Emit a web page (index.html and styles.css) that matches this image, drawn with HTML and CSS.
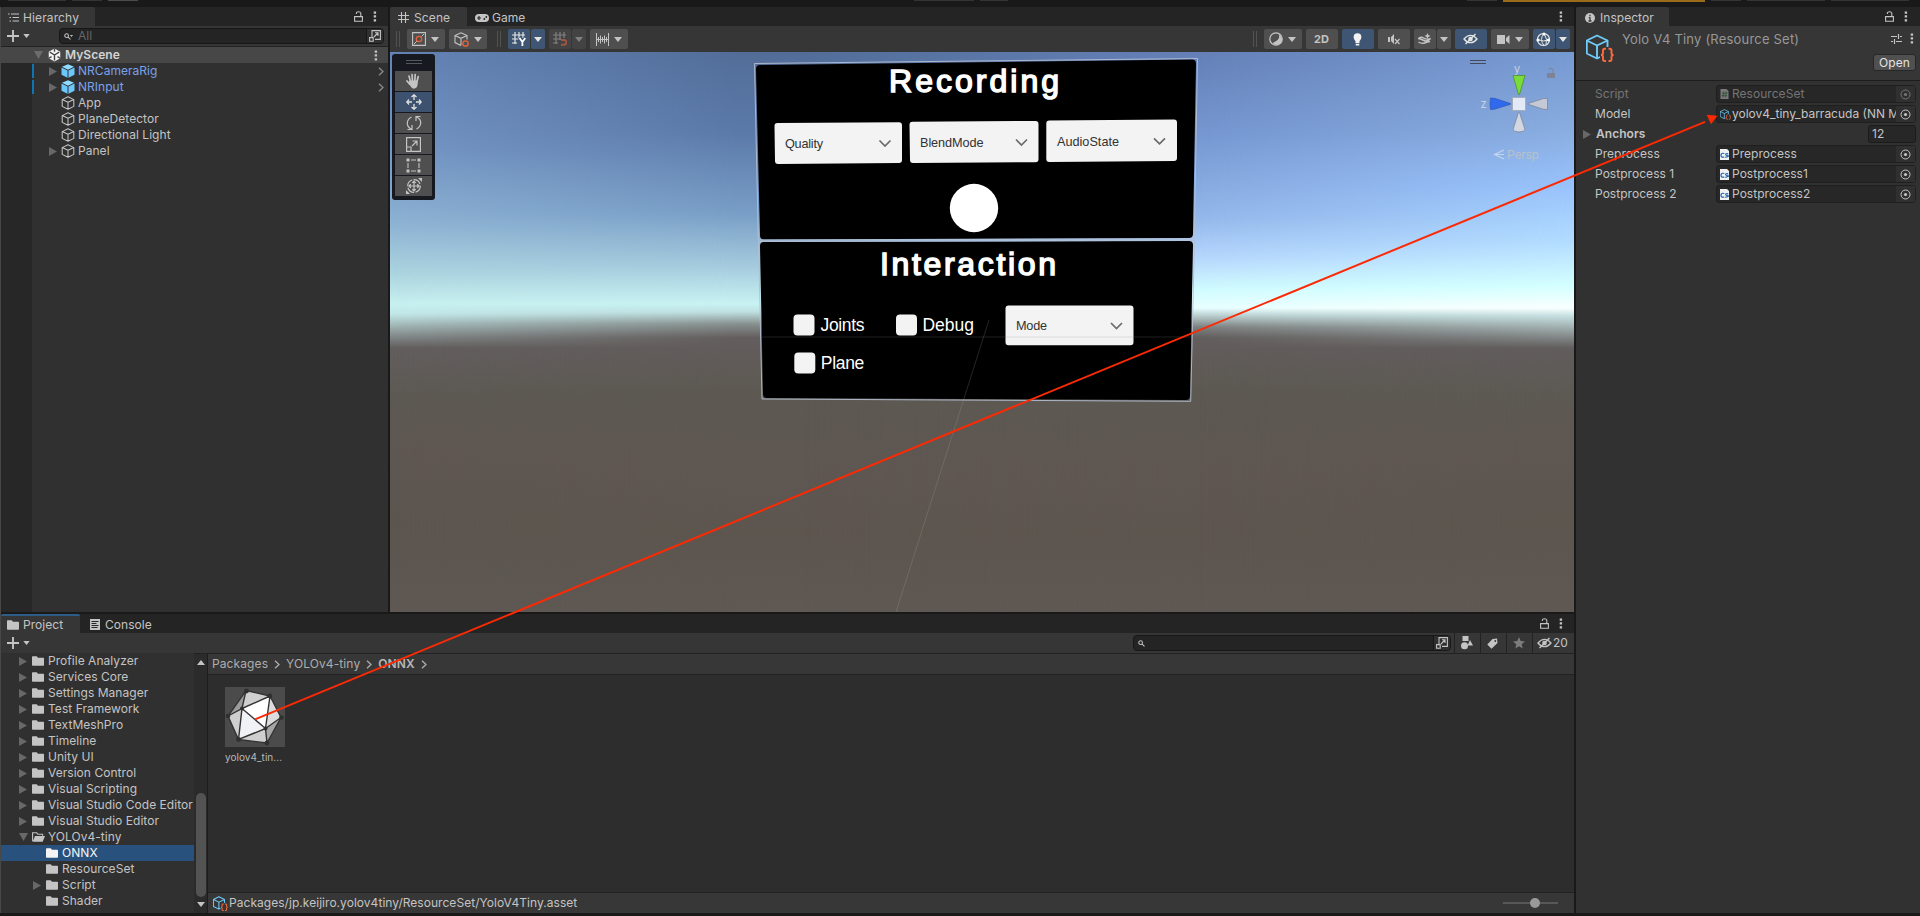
FILE: index.html
```html
<!DOCTYPE html>
<html lang="en">
<head>
<meta charset="utf-8">
<title>Unity Editor</title>
<link rel="stylesheet" href="styles.css">
</head>
<body>
<svg class="defs" width="0" height="0">
  <symbol id="lock" viewBox="0 0 9 11"><path d="M.6 5.6h7.8v4.6H.6zM2.4 3V1.8Q2.5.7 4.5.7T6.8 2v3.6" fill="none" stroke="currentColor" stroke-width="1.1"/></symbol>
  <symbol id="dots" viewBox="0 0 4 11"><path d="M.7.4h2.4v2.3H.7zM.7 4.3h2.4v2.3H.7zM.7 8.2h2.4v2.3H.7z" fill="currentColor"/></symbol>
  <symbol id="plus" viewBox="0 0 12 12"><path d="M6 0v12M0 6h12" stroke="currentColor" stroke-width="1.9"/></symbol>
  <symbol id="down" viewBox="0 0 8 5"><path d="M0 0h8L4 5z" fill="currentColor"/></symbol>
  <symbol id="right" viewBox="0 0 8 9"><path d="M0 0l8 4.5L0 9z" fill="currentColor"/></symbol>
  <symbol id="chev" viewBox="0 0 6 9"><path d="M1 .8l4 3.7-4 3.7" fill="none" stroke="currentColor" stroke-width="1.3"/></symbol>
  <symbol id="popout" viewBox="0 0 12 12"><path d="M3 7V.6h8.4v8.8H6M.6 7.6h3.6v3.6H.6zM5 7l3.8-4M6 2.8h3V6" fill="none" stroke="currentColor" stroke-width="1.1"/></symbol>
  <symbol id="mag" viewBox="0 0 8 8"><circle cx="3" cy="3" r="2.1" fill="none" stroke="currentColor" stroke-width="1.2"/><path d="M4.5 4.5L7.4 7.4" stroke="currentColor" stroke-width="1.2"/></symbol>
  <symbol id="cube" viewBox="0 0 14 14"><path d="M7 .8l5.8 2.8v6.8L7 13.3 1.2 10.400V3.600zM1.200 3.600L7 6.300l5.800-2.700M7 6.300v7" fill="none" stroke="currentColor" stroke-width="1.050" stroke-linejoin="round"/></symbol>
  <symbol id="prefab" viewBox="0 0 14 14"><path d="M7 .2l6 2.600L7 5.700 1 2.800z" fill="#8fdcff"/><path d="M.500 3.600l6 2.800v7.400l-6-3zM13.500 3.600l-6 2.800v7.400l6-3z" fill="#6cc8fb"/></symbol>
  <symbol id="folder" viewBox="0 0 12 10"><path d="M0 1Q0 .2.8.2h3.900l1.300 1.500h5.200q.8 0 .8.800v6.500q0 .8-.8.800H.8Q0 9.800 0 9z" fill="currentColor"/></symbol>
  <symbol id="folderopen" viewBox="0 0 13 10"><path d="M.6 9.200V.8h4l1.300 1.400h4.700v1.500" fill="none" stroke="currentColor" stroke-width="1.100"/><path d="M3 4h10l-2.300 5.800H.700z" fill="currentColor"/></symbol>
  <symbol id="target" viewBox="0 0 11 11"><circle cx="5.500" cy="5.500" r="4.500" fill="none" stroke="currentColor"/><circle cx="5.500" cy="5.500" r="1.600" fill="currentColor"/></symbol>
  <symbol id="asset" viewBox="0 0 28 28"><path d="M11 1.500l10.500 5v13L11 24.500.8 19.500v-13zM.800 6.500L11 11.500l10.500-5M11 11.500v13" fill="none" stroke="#6fcbfa" stroke-width="1.900" stroke-linejoin="round"/><path d="M14 13h14v15H14z" fill="var(--bg)"/><path d="M20 14.800h-1.300q-1.700 0-1.700 1.700v2.500q0 2-2 2 2 0 2 2v2.300q0 1.700 1.700 1.700H20M22.500 14.800h1.300q1.700 0 1.700 1.700v2.500q0 2 2 2-2 0-2 2v2.300q0 1.700-1.700 1.700h-1.300" fill="none" stroke="#ff6a3c" stroke-width="1.900"/></symbol>
  <symbol id="script" viewBox="0 0 9 11"><path d="M0 0h7l2 2v9H0z" fill="#f2f2f2"/><path d="M4.300 4.500Q1 3.600 1 6.200T4.300 8M8.200 4.800Q5.400 4.400 5.600 5.500T8 6.800 5.300 8.300" fill="none" stroke="#2568ac" stroke-width="1.200"/></symbol>
  <symbol id="eyeoff" viewBox="0 0 15 12"><path d="M1 6Q4 2.300 7.500 2.300T14 6Q11 9.700 7.500 9.700T1 6z" fill="none" stroke="currentColor" stroke-width="1.300"/><circle cx="7.500" cy="6" r="2.300" fill="currentColor"/><path d="M2.500 11L12.500 1" stroke="currentColor" stroke-width="1.500"/></symbol>
  <symbol id="magnetgrid" viewBox="0 0 14 14"><path d="M3 0v12M7 0v8M11 0v6M0 3h13M0 7h8M0 11h5" stroke="currentColor" stroke-width="1.200"/></symbol>
</svg>

<div class="appbar">
  <i class="s" style="width:58px"></i><i class="s" style="width:30px"></i><i class="s lit" style="width:30px"></i>
  <i class="s mid" style="width:60px"></i><i class="s" style="width:28px"></i>
  <i class="s far" style="width:30px"></i><i class="s warn" style="width:202px"></i><i class="s" style="width:30px"></i><i class="s" style="width:78px"></i><i class="s" style="width:78px"></i>
</div>
<div class="editor">
  <div class="left">
    <div class="upper">
      <section class="hierarchy">
        <header class="tabs">
          <div class="tab htab"><svg width="11" height="9" viewBox="0 0 11 9"><path d="M3 1h8M4.500 4.500H11M4.500 8H11M0 1h1.500M1.500 4.500H3M1.500 8H3" stroke="currentColor" stroke-width="1.100"/></svg>Hierarchy</div>
          <div class="tabtools"><svg width="9" height="11"><use href="#lock"/></svg><svg width="4" height="11"><use href="#dots"/></svg></div>
        </header>
        <div class="bar hbar">
          <svg class="plus" width="12" height="12"><use href="#plus"/></svg><svg width="7" height="4"><use href="#down"/></svg>
          <div class="search hsearch"><svg width="7" height="7"><use href="#mag"/></svg><svg class="tiny" width="3" height="2"><use href="#down"/></svg><span>All</span><b class="pop"><svg width="12" height="12"><use href="#popout"/></svg></b></div>
        </div>
        <div class="scenehead"><svg class="dim" width="9" height="8" viewBox="0 0 9 8"><path d="M0 0h9L4.500 8z" fill="currentColor"/></svg>
          <svg width="13" height="14" viewBox="0 0 14 14"><path d="M7 0l6.200 3.500v7L7 14 .8 10.500v-7z" fill="#f4f4f4"/><path d="M7 7V13M7 7L2 4M7 7l5-3" stroke="#444" stroke-width="1.500"/><path d="M7 0v3.500M.8 10.500l3-1.700M13.200 10.500l-3-1.700" stroke="#444" stroke-width="1.500"/></svg>
          <b>MyScene</b><svg class="end" width="4" height="11"><use href="#dots"/></svg></div>
        <div class="objects">
          <div class="obj pre"><svg class="arr" width="8" height="9"><use href="#right"/></svg><svg width="14" height="14"><use href="#prefab"/></svg><span>NRCameraRig</span><svg class="end" width="6" height="9"><use href="#chev"/></svg></div>
          <div class="obj pre"><svg class="arr" width="8" height="9"><use href="#right"/></svg><svg width="14" height="14"><use href="#prefab"/></svg><span>NRInput</span><svg class="end" width="6" height="9"><use href="#chev"/></svg></div>
          <div class="obj"><i class="arr"></i><svg width="14" height="14"><use href="#cube"/></svg><span>App</span></div>
          <div class="obj"><i class="arr"></i><svg width="14" height="14"><use href="#cube"/></svg><span>PlaneDetector</span></div>
          <div class="obj"><i class="arr"></i><svg width="14" height="14"><use href="#cube"/></svg><span>Directional Light</span></div>
          <div class="obj"><svg class="arr" width="8" height="9"><use href="#right"/></svg><svg width="14" height="14"><use href="#cube"/></svg><span>Panel</span></div>
        </div>
      </section>

      <section class="scene">
        <header class="tabs">
          <div class="tab stab"><svg width="11" height="11" viewBox="0 0 11 11"><path d="M3.500 0v11M7.500 0v11M0 3.500h11M0 7.500h11" stroke="currentColor" stroke-width="1.100"/></svg>Scene</div>
          <div class="tab off gtab"><svg width="14" height="8" viewBox="0 0 14 8"><rect width="14" height="8" rx="4" fill="currentColor"/><path d="M2 4h4M4 2v4" stroke="#282828" stroke-width="1.200"/><circle cx="9.300" cy="5" r=".9" fill="#282828"/><circle cx="11.300" cy="3" r=".9" fill="#282828"/></svg>Game</div>
          <div class="tabtools one"><svg width="4" height="11"><use href="#dots"/></svg></div>
        </header>
        <div class="stools">
          <i class="grip"></i>
          <div class="btn w38 m1"><svg width="14" height="14" viewBox="0 0 14 14"><path d="M.6.6h12.800v12.800H.6z" fill="none" stroke="currentColor" stroke-width="1.100"/><path d="M2 12l3-3M9.500 4.500L12 2" stroke="currentColor"/><circle cx="7" cy="7" r="2.700" fill="none" stroke="#e8633c" stroke-width="1.200"/></svg><svg width="8" height="5"><use href="#down"/></svg></div>
          <div class="btn w38"><svg width="15" height="15" viewBox="0 0 15 15"><path d="M7 .8l6 2.800v4M7 .8L1 3.600v7l6 3M1 3.600l6 2.700 6-2.700M7 6.300v7" fill="none" stroke="currentColor" stroke-width="1.100"/><circle cx="11.500" cy="11.500" r="2.700" fill="#505050" stroke="#e8633c" stroke-width="1.300"/></svg><svg width="8" height="5"><use href="#down"/></svg></div>
          <i class="grip g2"></i>
          <div class="pair m1 on"><div class="btn w22"><svg width="14" height="14" viewBox="0 0 14 14"><use href="#magnetgrid" width="14" height="14"/><path d="M7.200 5.800l3.100 4.400V14M13.400 5.800l-3.100 4.400" fill="none" stroke="#3e5673" stroke-width="3.600"/><path d="M7.500 6l2.900 4v4M13.300 6l-2.900 4" fill="none" stroke="#fff" stroke-width="1.800"/></svg></div><div class="btn w14"><svg width="8" height="5"><use href="#down"/></svg></div></div>
          <div class="pair off"><div class="btn w22"><svg width="14" height="14" viewBox="0 0 14 14"><use href="#magnetgrid" width="14" height="14"/><path d="M8 8h3q2.300 0 2.300 2.300T11 12.800H8" fill="none" stroke="#a0553f" stroke-width="2"/></svg></div><div class="btn w14"><svg width="8" height="5"><use href="#down"/></svg></div></div>
          <div class="btn w38"><svg width="13" height="13" viewBox="0 0 13 13"><path d="M.5 0v13M12.500 0v13M2.500 4v5M4.500 2.500v8M6.500 4v5M8.500 2.500v8M10.500 4v5M0 6.500h13" stroke="currentColor"/></svg><svg width="8" height="5"><use href="#down"/></svg></div>
          <div class="sp"></div>
          <i class="grip"></i>
          <div class="btn w38 m1"><svg width="14" height="14" viewBox="0 0 14 14"><circle cx="7" cy="7" r="6.200" fill="none" stroke="currentColor" stroke-width="1.300"/><path d="M9.500 1.500q3 6-6 9.500 4 4 8 0t-2-9.500z" fill="currentColor"/></svg><svg width="8" height="5"><use href="#down"/></svg></div>
          <div class="btn w32"><b class="two">2D</b></div>
          <div class="btn w32 on"><svg width="9" height="13" viewBox="0 0 9 13"><path d="M4.500.3q3.900 0 3.900 3.900 0 2-1.900 4v2H2.500v-2Q.6 6.200.6 4.200q0-3.900 3.900-3.900zM2.700 11h3.600v1.500H2.700z" fill="#f2f2f2"/></svg></div>
          <div class="btn w32"><svg width="12" height="11" viewBox="0 0 12 11"><path d="M0 3h2v5H0zM3 3l3-3v10L3 7z" fill="currentColor"/><path d="M7 5l4.500 5M11.500 5L7 10" stroke="currentColor" stroke-width="1.200"/></svg></div>
          <div class="pair"><div class="btn w22"><svg width="13" height="12" viewBox="0 0 13 12"><path d="M.5 5.500q3-2 5-.5t6.500 1q-3 3-6 1.500T.5 5.500zM.5 9q3 2 6 1t5.500-1.500" fill="none" stroke="currentColor" stroke-width="1.500"/><path d="M9.500 0l.9 2.100 2.100.9-2.100.9-.9 2.100-.9-2.100L6.500 3l2.100-.9z" fill="currentColor"/></svg></div><div class="btn w14"><svg width="8" height="5"><use href="#down"/></svg></div></div>
          <div class="btn w32 on"><svg width="15" height="12"><use href="#eyeoff"/></svg></div>
          <div class="btn w38"><svg width="13" height="9" viewBox="0 0 13 9"><path d="M0 0h8v9H0zM9 3l3.500-3v9L9 6z" fill="currentColor"/></svg><svg width="8" height="5"><use href="#down"/></svg></div>
          <div class="pair on"><div class="btn w22"><svg width="15" height="15" viewBox="0 0 15 15"><circle cx="7.500" cy="7.500" r="6" fill="none" stroke="currentColor" stroke-width="1.200"/><path d="M1.500 7.500q6 3 12 0M8 1.500q-5 6 0 12M8 1.500q4 6 2 11" fill="none" stroke="currentColor"/><circle cx="8" cy="2" r="1.600" fill="#fff"/><circle cx="2" cy="8" r="1.600" fill="#fff"/><circle cx="12.500" cy="8" r="1.600" fill="#fff"/></svg></div><div class="btn w14"><svg width="8" height="5"><use href="#down"/></svg></div></div>
        </div>
        <div class="view">
          <div class="sky a"></div><div class="sky b"></div><div class="sky c"></div><div class="sky d"></div>
          <svg class="world" width="1184" height="560" viewBox="390 52 1184 560">
            <g stroke-linejoin="round" stroke="#000" stroke-width="8">
              <path d="M760 69L1192 63.500 1189 234 764 235.500z"/>
              <path d="M764 246L1189 245 1186 396 767 394z"/>
            </g>
            <g fill="none" stroke="#b4bfd4" stroke-width=".9"><path d="M754.500 63.500L1197.500 58.500 1194.300 239 758.300 240z"/><path d="M758.500 241.500L1194.500 240.300 1190.700 401.300 762 399z"/></g>
            <g fill="#f3f3f3" stroke="#f3f3f3" stroke-width="6" stroke-linejoin="round">
              <path d="M777.500 126L899 125.200V160L778 161z"/><path d="M912.500 124.700L1035.500 124V159.200L913 160z"/><path d="M1049.300 123.500L1174 122.500V158L1049.300 159z"/><path d="M1008.500 308.500H1130.500V342.200H1008.500z"/>
            </g>
            <g fill="none" stroke="#6b6b6b" stroke-width="1.700"><path d="M879.500 140.500l5.500 5.500 5.500-5.500M1016 139.500l5.500 5.500 5.500-5.500M1154 138.300l5.500 5.500 5.500-5.500M1111 323l5.500 5.500 5.500-5.500"/></g>
            <g fill="#323232" class="uitext"><text x="785" y="148" textLength="38">Quality</text><text x="920" y="147" textLength="63.500">BlendMode</text><text x="1057" y="145.800" textLength="62">AudioState</text><text x="1016" y="330" textLength="31">Mode</text></g>
            <g fill="#fff" class="title"><text x="889" y="92" textLength="170">Recording</text><text x="880" y="274.500" textLength="176">Interaction</text></g>
            <circle cx="974" cy="208" r="24.200" fill="#fff"/>
            <g fill="#f3f3f3"><rect x="793.500" y="314.500" width="21" height="21" rx="4"/><rect x="896" y="314.500" width="21" height="21" rx="4"/><rect x="794.300" y="352.500" width="21" height="21" rx="4"/></g>
            <g fill="#fff" class="check"><text x="820.500" y="331" textLength="44">Joints</text><text x="922.500" y="331" textLength="51.500">Debug</text><text x="820.800" y="369" textLength="43.500">Plane</text></g>
            <path d="M762 337H1192" stroke="#8a8a8a" stroke-opacity=".22"/>
            <path d="M989 320L896 612" stroke="#b0b0a8" stroke-opacity=".3" stroke-width=".7"/>
            <path d="M1470 60.500h16M1470 63.500h16" stroke="#434a58"/>
            <g class="axis" fill="#c9d1e2"><text x="1514" y="73">y</text><text x="1480.500" y="107.500">z</text></g>
            <path d="M1513 75.500h12l-5.500 19h-1z" fill="#79dc3a" stroke="#4c932c" stroke-width=".8"/>
            <path d="M1490.500 98l4 .3 16 5.200v.8l-16 4.900-4 .3q-1-5.700 0-11.500z" fill="#3169ec" stroke="#2a51a8" stroke-width=".6"/>
            <path d="M1547.500 98.300l-4 .2-15.500 5v.8l15.500 5 4 .2z" fill="#c4c9d5" stroke="#7e8798" stroke-width=".8"/>
            <path d="M1518.500 112.500h1l5.500 17q-1 2.500-6 2.500t-6-2.500z" fill="#d2d7e2" stroke="#7e8798" stroke-width=".8"/>
            <rect x="1512.500" y="97.500" width="13" height="13" fill="#e3e9f6" stroke="#a6adba"/>
            <path d="M1547 73h8v5h-8z" fill="#7d8495"/><path d="M1549 70q0-2 2-1.800t2 2V73" fill="none" stroke="#7d8495"/>
            <path d="M1504 150l-9.500 4.500 9.500 4.500M1494.500 154.500h9.500" fill="none" stroke="#c3d4ee" stroke-width="1.200"/>
            <text class="persp" x="1507" y="159" textLength="32">Persp</text>
          </svg>
          <div class="palette">
            <i class="handle"></i>
            <div class="tool"><svg width="15" height="16" viewBox="0 0 15 16"><path d="M4.500 8.500L3 3M6.500 8L6 1.500M8.800 8L9.200 1.500M11 8.500l1.200-5M3.500 11L1 8" stroke="currentColor" stroke-width="1.700" stroke-linecap="round"/><path d="M3.500 7.500h8.300q.5 8-4 8.200Q5 15.500 2.500 9.800z" fill="currentColor"/></svg></div>
            <div class="tool sel"><svg width="16" height="16" viewBox="0 0 16 16"><path d="M8 1v5M8 10v5M1 8h5M10 8h5M5.500 3L8 .8 10.500 3M5.500 13L8 15.200l2.500-2.200M3 5.500L.8 8 3 10.500M13 5.500L15.200 8 13 10.500" fill="none" stroke="currentColor" stroke-width="1.300"/></svg></div>
            <div class="tool"><svg width="16" height="16" viewBox="0 0 16 16"><path d="M6 14.500Q1 12 1.300 8T5.500 2M10 1.500q5 2.500 4.700 6.500T10.500 14M1.500 14.500H6v-4.500M14.500 1.500H10V6" fill="none" stroke="currentColor" stroke-width="1.200"/></svg></div>
            <div class="tool"><svg width="15" height="15" viewBox="0 0 15 15"><path d="M.6.6h13.800v13.800H.6zM.6 10h4.400v4.400M6 9l4.500-4.500M6.500 4H11v4.500" fill="none" stroke="currentColor" stroke-width="1.200"/></svg></div>
            <div class="tool"><svg width="15" height="15" viewBox="0 0 15 15"><path d="M5 2h5M5 13h5M2 5v5M13 5v5" fill="none" stroke="currentColor" stroke-width="1.100"/><path d="M.5.5h3v3h-3zM11.500.5h3v3h-3zM.5 11.500h3v3h-3zM11.500 11.500h3v3h-3z" fill="currentColor"/></svg></div>
            <div class="tool"><svg width="16" height="16" viewBox="0 0 16 16"><circle cx="8" cy="8" r="6.300" fill="none" stroke="currentColor" stroke-width="1.200" stroke-dasharray="8 1.500"/><path d="M8 3v10M3 8h10M6.300 4.800L8 3l1.700 1.800M6.300 11.200L8 13l1.700-1.800M4.800 6.300L3 8l1.800 1.700M11.200 6.300L13 8l-1.800 1.700" fill="none" stroke="currentColor" stroke-width="1.200"/><path d="M12 0h4v4zM0 12v4h4z" fill="currentColor"/></svg></div>
          </div>
        </div>
      </section>
    </div>

    <section class="project">
      <header class="tabs ptabs">
        <div class="tab ptab"><svg width="12" height="10"><use href="#folder"/></svg>Project</div>
        <div class="tab off ctab"><svg width="10" height="11" viewBox="0 0 10 11"><rect width="10" height="11" fill="#c4c4c4"/><path d="M1.500 2.500h7M1.500 4.500h5M1.500 6.500h7M1.500 8.500h6" stroke="#282828"/></svg>Console</div>
        <div class="tabtools"><svg width="9" height="11"><use href="#lock"/></svg><svg width="4" height="11"><use href="#dots"/></svg></div>
      </header>
      <div class="bar pbar">
        <svg class="plus" width="12" height="12"><use href="#plus"/></svg><svg width="7" height="4"><use href="#down"/></svg>
        <div class="search psearch"><svg width="7" height="7"><use href="#mag"/></svg><b class="pop"><svg width="12" height="12"><use href="#popout"/></svg></b></div>
        <div class="cells">
          <div class="cell"><svg width="12" height="14" viewBox="0 0 12 14"><path d="M1.500 0h6v5h-6zM9 4l3 5.500H6.500z" fill="currentColor"/><circle cx="3.500" cy="9.800" r="3.500" fill="currentColor"/></svg></div>
          <div class="cell"><svg width="11" height="11" viewBox="0 0 11 11"><path d="M5.500 1L10 .500 10.500 5 4.500 10.800 .3 6.500z" fill="currentColor"/><circle cx="8.300" cy="3" r=".9" fill="#383838"/></svg></div>
          <div class="cell star"><svg width="12" height="12" viewBox="0 0 12 12"><path d="M6 0l1.700 4.100 4.300.4-3.300 2.800 1 4.300L6 9.300l-3.700 2.300 1-4.300L0 4.500l4.300-.4z" fill="currentColor"/></svg></div>
          <div class="cell eye"><svg width="15" height="12"><use href="#eyeoff"/></svg>20</div>
        </div>
      </div>
      <div class="pbody">
        <div class="tree">
          <div class="fold"><svg class="arr" width="8" height="9"><use href="#right"/></svg><svg width="12" height="10"><use href="#folder"/></svg>Profile Analyzer</div>
          <div class="fold"><svg class="arr" width="8" height="9"><use href="#right"/></svg><svg width="12" height="10"><use href="#folder"/></svg>Services Core</div>
          <div class="fold"><svg class="arr" width="8" height="9"><use href="#right"/></svg><svg width="12" height="10"><use href="#folder"/></svg>Settings Manager</div>
          <div class="fold"><svg class="arr" width="8" height="9"><use href="#right"/></svg><svg width="12" height="10"><use href="#folder"/></svg>Test Framework</div>
          <div class="fold"><svg class="arr" width="8" height="9"><use href="#right"/></svg><svg width="12" height="10"><use href="#folder"/></svg>TextMeshPro</div>
          <div class="fold"><svg class="arr" width="8" height="9"><use href="#right"/></svg><svg width="12" height="10"><use href="#folder"/></svg>Timeline</div>
          <div class="fold"><svg class="arr" width="8" height="9"><use href="#right"/></svg><svg width="12" height="10"><use href="#folder"/></svg>Unity UI</div>
          <div class="fold"><svg class="arr" width="8" height="9"><use href="#right"/></svg><svg width="12" height="10"><use href="#folder"/></svg>Version Control</div>
          <div class="fold"><svg class="arr" width="8" height="9"><use href="#right"/></svg><svg width="12" height="10"><use href="#folder"/></svg>Visual Scripting</div>
          <div class="fold"><svg class="arr" width="8" height="9"><use href="#right"/></svg><svg width="12" height="10"><use href="#folder"/></svg>Visual Studio Code Editor</div>
          <div class="fold"><svg class="arr" width="8" height="9"><use href="#right"/></svg><svg width="12" height="10"><use href="#folder"/></svg>Visual Studio Editor</div>
          <div class="fold open"><svg class="arr" width="9" height="8" viewBox="0 0 9 8"><path d="M0 0h9L4.500 8z" fill="currentColor"/></svg><svg width="13" height="10"><use href="#folderopen"/></svg>YOLOv4-tiny</div>
          <div class="fold sub selected"><i class="arr"></i><svg width="12" height="10"><use href="#folder"/></svg>ONNX</div>
          <div class="fold sub"><i class="arr"></i><svg width="12" height="10"><use href="#folder"/></svg>ResourceSet</div>
          <div class="fold sub"><svg class="arr" width="8" height="9"><use href="#right"/></svg><svg width="12" height="10"><use href="#folder"/></svg>Script</div>
          <div class="fold sub"><i class="arr"></i><svg width="12" height="10"><use href="#folder"/></svg>Shader</div>
        </div>
        <div class="scroll"><svg class="up" width="8" height="5"><use href="#down"/></svg><i class="thumb"></i><svg width="8" height="5"><use href="#down"/></svg></div>
        <div class="assets">
          <div class="crumbs"><span>Packages</span><svg width="6" height="9"><use href="#chev"/></svg><span>YOLOv4-tiny</span><svg width="6" height="9"><use href="#chev"/></svg><b>ONNX</b><svg width="6" height="9"><use href="#chev"/></svg></div>
          <div class="grid"><div class="item">
            <svg width="60" height="60" viewBox="0 0 60 60"><rect width="60" height="60" fill="#4b4b4b"/>
              <path d="M21 3.500L45 9l11 21.500L42 56 13.500 52.500 3 29z" fill="#cfcfcf"/>
              <path d="M21 3.500L17 21.500 3 29z" fill="#9b9b9b"/><path d="M40.500 41.500L56 30.500 42 56z" fill="#a6a6a6"/><path d="M45 9l11 21.500L40.500 41.500z" fill="#dcdcdc"/><path d="M17 21.500L45 9 40.500 41.500z" fill="#fff"/><path d="M17 21.500L40.500 41.500 13.500 52.500z" fill="#f1f2f5"/>
              <path d="M21 3.500L45 9l11 21.500L42 56 13.500 52.500 3 29zM21 3.500L17 21.500 3 29M17 21.500L45 9 40.500 41.500zL13.500 52.500 40.500 41.500 42 56M40.500 41.500L56 30.500" fill="none" stroke="#333" stroke-width="1.400"/>
              <g fill="#303030"><circle cx="21.500" cy="4" r="2.400"/><circle cx="45" cy="9" r="2.400"/><circle cx="56.500" cy="30.500" r="2.300"/><circle cx="42" cy="56" r="2.400"/><circle cx="13.500" cy="52.500" r="2.400"/><circle cx="3" cy="29" r="2.300"/><circle cx="17" cy="21.500" r="2"/><circle cx="40.500" cy="41.500" r="2"/></g></svg>
            <span>yolov4_tin...</span></div></div>
          <footer class="path"><svg width="15" height="15"><use href="#asset"/></svg><span>Packages/jp.keijiro.yolov4tiny/ResourceSet/YoloV4Tiny.asset</span><i class="slider"></i></footer>
        </div>
      </div>
    </section>
  </div>

  <section class="inspector">
    <header class="tabs">
      <div class="tab itab"><svg width="10" height="10" viewBox="0 0 10 10"><circle cx="5" cy="5" r="5" fill="currentColor"/><path d="M5 1.700v1.600M5 4.200v4M3.800 4.700H5M3.500 8h3" stroke="#383838" stroke-width="1.300"/></svg>Inspector</div>
      <div class="tabtools"><svg width="9" height="11"><use href="#lock"/></svg><svg width="4" height="11"><use href="#dots"/></svg></div>
    </header>
    <div class="ihead">
      <svg class="big" width="28" height="28"><use href="#asset"/></svg>
      <span class="name">Yolo V4 Tiny (Resource Set)</span>
      <div class="iright"><div class="icons"><svg width="11" height="10" viewBox="0 0 11 10"><path d="M0 2.500h6M9 2.500h2M0 7.500h2M5 7.500h6M7.500 0v5M3.500 5v5" stroke="currentColor" stroke-width="1.200"/></svg><svg width="4" height="11"><use href="#dots"/></svg></div><div class="openbtn">Open</div></div>
    </div>
    <div class="props">
      <div class="prop disabled"><label>Script</label><div class="field"><svg width="9" height="10" viewBox="0 0 8 10"><path d="M0 0h6l2 2v8H0z" fill="#7a7a7a"/><path d="M3.200 2.500l-.7 6M5.700 2.500l-.7 6M1.300 4.200H7M1 6.700h5.700" stroke="#335238" stroke-width=".9"/></svg><span>ResourceSet</span><b><svg width="11" height="11"><use href="#target"/></svg></b></div></div>
      <div class="prop"><label>Model</label><div class="field model"><svg width="11" height="11"><use href="#asset"/></svg><span>yolov4_tiny_barracuda (NN M</span><b><svg width="11" height="11"><use href="#target"/></svg></b></div></div>
      <div class="prop anchors"><svg width="8" height="9"><use href="#right"/></svg><label>Anchors</label><div class="num">12</div></div>
      <div class="prop"><label>Preprocess</label><div class="field"><svg width="9" height="11"><use href="#script"/></svg><span>Preprocess</span><b><svg width="11" height="11"><use href="#target"/></svg></b></div></div>
      <div class="prop"><label>Postprocess 1</label><div class="field"><svg width="9" height="11"><use href="#script"/></svg><span>Postprocess1</span><b><svg width="11" height="11"><use href="#target"/></svg></b></div></div>
      <div class="prop"><label>Postprocess 2</label><div class="field"><svg width="9" height="11"><use href="#script"/></svg><span>Postprocess2</span><b><svg width="11" height="11"><use href="#target"/></svg></b></div></div>
    </div>
  </section>
</div>
<svg class="arrow" width="1920" height="916" viewBox="0 0 1920 916"><path d="M255 719.300L1705 121.800" stroke="#fb2a05" stroke-width="2"/><path d="M1717.500 115.700l-10.800-1 4.300 9.600z" fill="#fb2a05"/></svg>
</body>
</html>
```

FILE: styles.css
```css
* { box-sizing: border-box; }
body {
  margin: 0; width: 1920px; height: 916px; overflow: hidden; background: #191919;
  color: #c4c4c4; font: 12px/16px Inter, "Noto Sans", sans-serif; letter-spacing: .04px;
  display: flex; flex-direction: column;
}
svg { display: block; flex: none; }
.defs { display: none; }
.arrow { position: absolute; left: 0; top: 0; pointer-events: none; }

.appbar { height: 7px; display: flex; padding-left: 8px; gap: 6px; flex: none; }
.s { height: 1px; background: #343434; flex: none; }
.s.lit { background: #4c4c4c; }
.s.mid { margin-left: 770px; }
.s.far { margin-left: 453px; }
.s.warn { background: #9a6b18; height: 2px; }

.editor { display: flex; gap: 2px; height: 906px; }
.left { width: 1574px; display: flex; flex-direction: column; gap: 2px; border-left: 1px solid #484848; }
.upper { display: flex; gap: 2px; height: 605px; }
.hierarchy { width: 387px; background: #303030; display: flex; flex-direction: column; }
.scene { width: 1184px; display: flex; flex-direction: column; }

.tabs { height: 19px; background: #242424; display: flex; flex: none; }
.tab { height: 19px; background: #363636; display: flex; align-items: center; padding-top: 2px; border-radius: 2px 2px 0 0; }
.tab.off { background: none; }
.htab { width: 94px; padding-left: 7px; gap: 4px; letter-spacing: .12px; }
.stab { width: 77px; padding-left: 8px; gap: 5px; letter-spacing: .12px; }
.gtab { padding-left: 8px; gap: 3px; }
.tabtools { margin-left: auto; display: flex; align-items: center; gap: 10px; padding-right: 11px; }

.bar { height: 20px; background: #363636; display: flex; align-items: center; padding-left: 6px; flex: none; }
.plus { margin-right: 4px; }
.search { display: flex; align-items: center; height: 16px; background: #242424; border: 1px solid #171717; border-radius: 4px; color: #c4c4c4; padding-left: 4px; }
.search span { color: #666; margin-left: 5px; }
.hsearch { width: 325px; margin-left: 29px; }
.tiny { margin-left: -1px; }
.pop { margin-left: auto; width: 17px; height: 14px; background: #303030; border-left: 1px solid #171717; display: flex; align-items: center; justify-content: center; border-radius: 0 3px 3px 0; }
.scenehead { height: 17px; border-top: 1px solid #222; background: #474747; display: flex; align-items: center; padding: 0 10px 0 33px; flex: none; }
.scenehead .dim { color: #6c6c6c; margin-right: 5px; }
.scenehead b { margin-left: 4px; font-weight: 600; color: #d4d4d4; }
.end { margin-left: auto; }
.objects { flex: 1; border-left: 31px solid #272727; }
.obj { height: 16px; display: flex; align-items: center; padding: 0 4px 0 17px; }
.arr { width: 8px; color: #686868; flex: none; }
.obj .arr { margin-right: 4px; }
.obj span { margin-left: 3px; }
.obj.pre { height: 14px; margin: 1px 0; border-left: 2px solid #0f74b0; padding-left: 15px; }
.objects .obj.pre + .obj.pre { margin-top: 2px; }
.obj.pre span { color: #7aa2ec; }
.obj .end { color: #8a8a8a; }

.stools { height: 26px; background: #363636; display: flex; align-items: center; gap: 4px; padding: 0 4px 0 6px; flex: none; }
.grip { width: 4px; height: 16px; border: solid #525252; border-width: 0 1px; flex: none; }
.g2 { margin-left: 6px; }
.m1 { margin-left: 3px; }
.btn { height: 20px; background: #4f4f4f; border-radius: 2px; display: flex; align-items: center; justify-content: center; gap: 5px; flex: none; padding-right: 1px; }
.w38 { width: 38px; }
.w32 { width: 32px; }
.w22 { width: 22px; }
.w14 { width: 14px; }
.pair { display: flex; gap: 1px; }
.btn.on, .pair.on .btn { background: #3e5673; color: #e4e4e4; }
.pair.off .btn { background: #434343; color: #808080; }
.sp { flex: 1; }
.two { font-size: 11px; font-weight: 700; }

.view { position: relative; height: 560px; overflow: hidden; }
.sky, .world { position: absolute; left: 0; top: 0; width: 1184px; height: 560px; }
.a { background: linear-gradient(#6484b6 0, #7597c5 100px, #8db2d3 170px, #abd3df 220px, #c7f0f0 252px, #c2e7e8 262px, #8f9b9b 280px, #635e5e 296px, #5d5953 345px, #5f5752 400px, #5c564f 470px, #5f5853 560px); }
.b { background: linear-gradient(#526d98 0, #5b79a8 80px, #789dc6 160px, #a5cbde 215px, #c8f2f2 252px, #bfdfe0 260px, #87908f 272px, #635d5d 286px, #5d5952 340px, #5f5752 420px, #5d564f 480px, #5f5853 560px);
  -webkit-mask: linear-gradient(90deg, transparent, #000 29%); mask: linear-gradient(90deg, transparent, #000 29%); }
.c { background: linear-gradient(#6480b7 0, #7596d0 80px, #93b7ea 165px, #b5d6fd 205px, #d1fcff 238px, #e8ffff 256px, #bdd3d3 263px, #7e8181 275px, #635d5d 286px, #5d5952 340px, #5f5752 420px, #5d564f 480px, #5f5853 560px);
  -webkit-mask: linear-gradient(90deg, transparent 35%, #000 68%); mask: linear-gradient(90deg, transparent 35%, #000 68%); }
.d { background: linear-gradient(#7799d2 0, #88acdf 75px, #99c3fc 135px, #b2dcff 190px, #c2ecff 210px, #d2ffff 233px, #fafffe 256px, #c5dfe0 264px, #909999 281px, #625d5d 296px, #5d5953 345px, #5f5752 400px, #5c564f 470px, #5f5853 560px);
  -webkit-mask: linear-gradient(90deg, transparent 68%, #000); mask: linear-gradient(90deg, transparent 68%, #000); }
.uitext { font: 12.7px "Liberation Sans", sans-serif; letter-spacing: 0; }
.title { font: 32px "Liberation Sans", sans-serif; letter-spacing: 0; stroke: #fff; stroke-width: 1.5px; }
.check { font: 17.5px "Liberation Sans", sans-serif; letter-spacing: 0; }
.axis { font: 11px Inter, sans-serif; }
.persp { font: 12px Inter, sans-serif; fill: #b9c0cb; }

.palette { position: absolute; left: 2px; top: 2px; width: 43px; height: 146px; background: #171920; border-radius: 3px; padding: 6px 3px 0; display: flex; flex-direction: column; gap: 1px; }
.handle { width: 16px; height: 4px; border: solid #55585e; border-width: 1px 0; margin: 0 auto 6px; flex: none; }
.tool { height: 20px; background: #4f4f4f; display: flex; align-items: center; justify-content: center; }
.tool.sel { background: #3c526f; color: #e0e0e0; }

.project { height: 299px; display: flex; flex-direction: column; background: #2d2d2d; }
.ptab { width: 79px; border-top: 2px solid #2c5d87; padding: 1px 0 0 6px; gap: 4px; }
.ctab { padding: 2px 0 0 10px; gap: 5px; }
.pbar { height: 21px; border-bottom: 1px solid #222; }
.psearch { width: 318px; margin-left: auto; }
.cells { display: flex; margin-left: 3px; }
.cell { height: 20px; width: 26px; border-left: 1px solid #222; display: flex; align-items: center; justify-content: center; padding-right: 2px; }
.star { color: #7d7d7d; }
.eye { width: 42px; gap: 1px; justify-content: flex-start; padding-left: 4px; }
.pbody { height: 259px; display: flex; }
.tree { width: 193px; background: #303030; margin-top: -1px; height: 260px; overflow: hidden; }
.fold { height: 16px; display: flex; align-items: center; padding-left: 18px; white-space: nowrap; }
.fold .arr + svg { margin: 0 4px 0 5px; }
.open .arr { width: 9px; margin-right: -1px; }
.open .arr + svg { margin-right: 3px; }
.sub { padding-left: 32px; }
.selected { background: #28527d; color: #f4f4f4; }
.scroll { width: 14px; background: #2b2b2b; border-right: 1px solid #1d1d1d; display: flex; flex-direction: column; align-items: center; padding: 6px 0 6px; }
.up { transform: rotate(180deg); }
.thumb { width: 10px; height: 104px; border-radius: 5px; background: #535353; margin: auto 0 5px; }
.assets { flex: 1; display: flex; flex-direction: column; }
.crumbs { height: 21px; background: #373737; border-bottom: 1px solid #222; display: flex; align-items: center; gap: 6px; padding-left: 4px; color: #adadad; letter-spacing: .1px; }
.crumbs b { font-weight: 600; color: #b8b8b8; }
.grid { flex: 1; padding: 12px 17px; }
.item { width: 60px; font-size: 10px; color: #b8b8b8; text-align: left; }
.item span { display: block; margin-top: 2px; white-space: nowrap; }
.path { --bg: #373737; height: 21px; background: #373737; border-top: 1px solid #222; display: flex; align-items: center; padding-left: 5px; gap: 1px; }
.slider { width: 55px; height: 2px; background: #585858; margin: 0 16px 0 auto; display: flex; align-items: center; padding-left: 27px; }
.slider::before { content: ""; width: 10px; height: 10px; border-radius: 5px; background: #999; }

.inspector { --bg: #363636; width: 344px; background: #313131; display: flex; flex-direction: column; }
.inspector .tabtools { padding-right: 12px; }
.itab { width: 93px; padding-left: 9px; gap: 5px; }
.ihead { height: 55px; background: #363636; border-bottom: 1px solid #1d1d1d; display: flex; padding: 7px 4px 0 10px; }
.big { margin-top: 1px; }
.name { margin: -1px 0 0 8px; font-size: 13px; line-height: 14px; letter-spacing: .2px; color: #989898; }
.iright { margin-left: auto; display: flex; flex-direction: column; align-items: flex-end; gap: 10px; }
.icons { display: flex; align-items: center; gap: 8px; margin-right: 2px; }
.openbtn { width: 43px; height: 17px; background: #505050; border: 1px solid #272727; border-radius: 3px; text-align: center; line-height: 15px; color: #e4e4e4; }
.props { padding-top: 3px; }
.prop { height: 20px; display: flex; align-items: center; padding: 0 4px 0 19px; }
.prop label { width: 121px; }
.field { --bg: #282828; width: 200px; height: 18px; border: 1px solid #1f1f1f; border-radius: 3px; background: #272727; display: flex; align-items: center; padding-left: 3px; }
.field span { margin-left: 3px; flex: 1; white-space: nowrap; min-width: 0; }
.model span { margin-left: 1px; letter-spacing: 0; }
.field b { width: 19px; height: 16px; background: #303030; display: flex; align-items: center; justify-content: center; flex: none; }
.disabled { color: #757575; }
.anchors { padding-left: 7px; }
.anchors svg { color: #686868; }
.anchors label { margin-left: 5px; font-weight: 600; }
.num { margin-left: auto; width: 48px; height: 18px; background: #272727; border: 1px solid #1b1b1b; border-radius: 3px; padding-left: 3px; }
```
